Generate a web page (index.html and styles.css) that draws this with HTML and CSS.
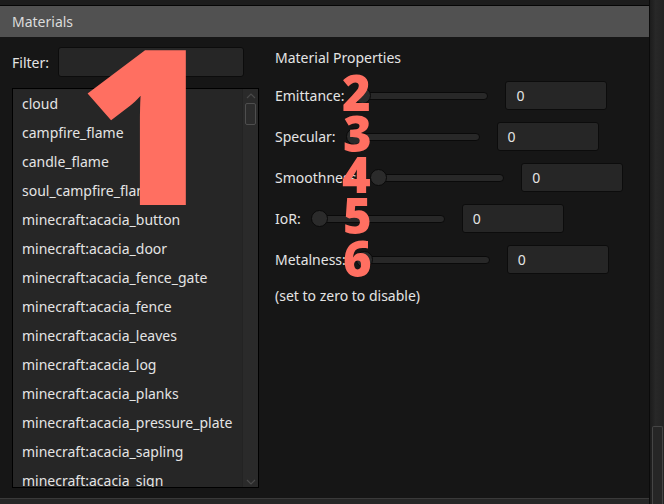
FILE: index.html
```html
<!DOCTYPE html>
<html lang="en">
  <head>
    <meta charset="UTF-8">
    <title>Materials</title>
    <link rel="stylesheet" href="styles.css">
  </head>
  <body>
    <div class="window">
      <div class="main">
        <div class="topstrip"></div>
        <div class="header">Materials</div>
        <div class="content">
          <div class="leftcol">
            <div class="filter">
              <span class="filter-label">Filter:</span>
              <div class="field filter-field"></div>
            </div>
            <div class="list">
              <div class="items">
                <div class="item">cloud</div>
                <div class="item">campfire_flame</div>
                <div class="item">candle_flame</div>
                <div class="item">soul_campfire_flame</div>
                <div class="item">minecraft:acacia_button</div>
                <div class="item">minecraft:acacia_door</div>
                <div class="item">minecraft:acacia_fence_gate</div>
                <div class="item">minecraft:acacia_fence</div>
                <div class="item">minecraft:acacia_leaves</div>
                <div class="item">minecraft:acacia_log</div>
                <div class="item">minecraft:acacia_planks</div>
                <div class="item">minecraft:acacia_pressure_plate</div>
                <div class="item">minecraft:acacia_sapling</div>
                <div class="item">minecraft:acacia_sign</div>
              </div>
              <div class="lscroll">
                <svg class="arrow" width="14" height="10" viewBox="0 0 14 10"><path d="M3 7 L7 3 L11 7" fill="none" stroke="#4a4a4a" stroke-width="1.2"/></svg>
                <div class="lthumb"></div>
                <div class="spacer"></div>
                <svg class="arrow" width="14" height="10" viewBox="0 0 14 10"><path d="M3 3 L7 7 L11 3" fill="none" stroke="#4a4a4a" stroke-width="1.2"/></svg>
              </div>
            </div>
          </div>
          <div class="rightcol">
            <div class="title">Material Properties</div>
            <div class="row">
              <span class="label">Emittance:</span>
              <div class="slider"><div class="track"></div><div class="knob"></div></div>
              <div class="field">0</div>
            </div>
            <div class="row">
              <span class="label">Specular:</span>
              <div class="slider"><div class="track"></div><div class="knob"></div></div>
              <div class="field">0</div>
            </div>
            <div class="row">
              <span class="label">Smoothness:</span>
              <div class="slider"><div class="track"></div><div class="knob"></div></div>
              <div class="field">0</div>
            </div>
            <div class="row">
              <span class="label">IoR:</span>
              <div class="slider"><div class="track"></div><div class="knob"></div></div>
              <div class="field">0</div>
            </div>
            <div class="row">
              <span class="label">Metalness:</span>
              <div class="slider"><div class="track"></div><div class="knob"></div></div>
              <div class="field">0</div>
            </div>
            <div class="note">(set to zero to disable)</div>
          </div>
        </div>
        <div class="bottombar"></div>
      </div>
      <div class="vscroll">
        <div class="vthumb"></div>
      </div>
    </div>

    <!-- annotation marks drawn over the panel -->
    <span class="mark big m1">1</span>
    <span class="mark m2">2</span>
    <span class="mark m3">3</span>
    <span class="mark m4">4</span>
    <span class="mark m5">5</span>
    <span class="mark m6">6</span>
  </body>
</html>
```

FILE: styles.css
```css
body {
  margin: 0;
  background-color: #161616;
  font-family: "Noto Sans", "Open Sans", sans-serif;
  font-size: 14px;
  color: #e4e4e4;
  overflow: hidden;
}
.window {
  display: flex;
  width: 664px;
  height: 504px;
}
.main {
  width: 649px;
  display: flex;
  flex-direction: column;
  border-right: 1px solid #0b0b0b;
}
.topstrip {
  height: 5px;
  background-color: #1c1c1c;
  border-bottom: 1px solid #050505;
}
.header {
  height: 31px;
  line-height: 31px;
  padding-left: 12px;
  background-color: #515151;
  color: #dcdcdc;
}
.content {
  flex: 1;
  display: flex;
  gap: 16px;
  padding: 10px 0 0 12px;
}
.leftcol {
  width: 247px;
  display: flex;
  flex-direction: column;
  gap: 11px;
}
.filter {
  display: flex;
  align-items: center;
  height: 30px;
}
.filter-label {
  width: 46px;
}
.field {
  box-sizing: border-box;
  height: 29px;
  width: 102px;
  padding-left: 10px;
  line-height: 27px;
  background-color: #262626;
  border: 1px solid #0c0c0c;
  border-radius: 3px;
}
.filter-field {
  width: 186px;
  height: 30px;
}
.list {
  box-sizing: border-box;
  height: 400px;
  display: flex;
  border: 1px solid #000;
  background-color: #262626;
  overflow: hidden;
}
.items {
  flex: 1;
  overflow: hidden;
}
.item {
  height: 29px;
  line-height: 29px;
  padding-left: 9px;
  white-space: nowrap;
}
.lscroll {
  width: 15px;
  display: flex;
  flex-direction: column;
  align-items: center;
  background-color: #2a2a2a;
  border-left: 1px solid #232323;
}
.arrow {
  margin-top: 2px;
  flex-shrink: 0;
}
.lthumb {
  box-sizing: border-box;
  width: 11px;
  height: 22px;
  margin-top: 2px;
  border: 1px solid #4e4e4e;
  border-radius: 2px;
  background-color: #2c2c2c;
}
.spacer {
  flex: 1;
}
.rightcol {
  display: flex;
  flex-direction: column;
  gap: 12px;
}
.title {
  height: 20px;
  line-height: 20px;
  margin: 1px 0 1px;
}
.row {
  display: flex;
  align-items: center;
  height: 29px;
}
.label {
  margin-right: 10px;
}
.slider {
  position: relative;
  width: 134px;
  height: 17px;
  margin-right: 17px;
}
.track {
  box-sizing: border-box;
  position: absolute;
  left: 0;
  right: 0;
  top: 5px;
  height: 8px;
  background-color: #282828;
  border: 1px solid #0a0a0a;
  border-radius: 4px;
}
.knob {
  box-sizing: border-box;
  position: absolute;
  left: 0;
  top: 0;
  width: 17px;
  height: 17px;
  border-radius: 50%;
  background-color: #2b2b2b;
  border: 1px solid #0a0a0a;
}
.note {
  margin-top: 0;
}
.bottombar {
  height: 5px;
  border-top: 1px solid #3a3a3a;
  background-color: #262626;
}
.vscroll {
  flex: 1;
  display: flex;
  flex-direction: column;
  background: linear-gradient(to right, #1c1c1c, #282828 40%, #222 100%);
}
.vthumb {
  box-sizing: border-box;
  margin: auto 1px 0 2px;
  height: 78px;
  border: 1px solid #454545;
  border-bottom: none;
  border-radius: 2px 2px 0 0;
  background-color: #262626;
}
.mark {
  position: absolute;
  font-family: "Open Sans", sans-serif;
  font-weight: 800;
  font-size: 49px;
  line-height: 1;
  color: #ff6f61;
}
.big {
  font-size: 217px;
  transform: scaleX(1.08);
  transform-origin: left top;
}
.m1 { left: 78px; top: 13px; }
.m2 { left: 342px; top: 68px; }
.m3 { left: 343px; top: 109px; }
.m4 { left: 342px; top: 150px; }
.m5 { left: 343px; top: 191px; }
.m6 { left: 343px; top: 234px; }
```
